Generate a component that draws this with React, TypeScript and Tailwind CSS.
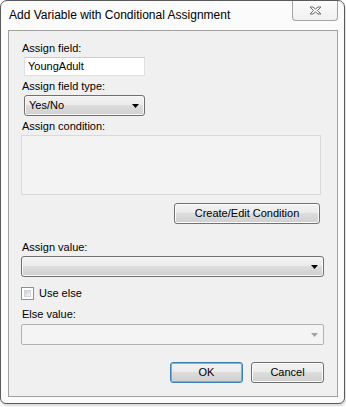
import React from "react";

const font = { fontFamily: '"Liberation Sans", Arial, sans-serif' };

const Arrow = ({ disabled }: { disabled?: boolean }) => (
  <svg width="7" height="4" viewBox="0 0 7 4" className="shrink-0">
    <path d="M0 0H7L3.5 4Z" fill={disabled ? "#a2a2a2" : "#000"} />
  </svg>
);

const Combo = ({ value, className }: { value?: string; className: string }) => (
  <div
    className={`h-[21px] flex items-center justify-between pl-[4px] pr-[5px] rounded-[3px] border border-[#707070] bg-[linear-gradient(#f2f2f2_0%,#ebebeb_50%,#dddddd_50%,#cfcfcf_100%)] shadow-[inset_0_0_0_1px_#f8f8f8] text-[11px] text-black ${className}`}
  >
    <span>{value}</span>
    <Arrow />
  </div>
);

const WinButton = ({ label, className, isDefault }: { label: string; className: string; isDefault?: boolean }) => (
  <div
    className={`h-[21px] flex items-center justify-center rounded-[3px] border text-[11px] text-black bg-[linear-gradient(#f2f2f2_0%,#ebebeb_50%,#dddddd_50%,#cfcfcf_100%)] ${
      isDefault
        ? "border-[#3c7fb1] shadow-[inset_0_0_0_1px_#48c4f5]"
        : "border-[#707070] shadow-[inset_0_0_0_1px_#fcfcfc]"
    } ${className}`}
  >
    {label}
  </div>
);

export default function App() {
  return (
    <div className="w-[346px] h-[407px] bg-white" style={font}>
      <div className="w-[345px] h-[404px] border border-[#5a5a5a] rounded-t-[7px] rounded-b-[6px] bg-[#fbfbfb] flex flex-col shadow-[1px_2px_2px_rgba(0,0,0,0.15)]">
        {/* title bar */}
        <div className="h-[29px] flex items-start justify-between">
          <div className="pl-[8px] pt-[7px] text-[12px] leading-[15px] text-black">
            Add Variable with Conditional Assignment
          </div>
          <div className="mr-[6px] w-[46px] h-[20px] border border-t-0 border-[#a5a5a5] rounded-b-[4px] bg-gradient-to-b from-[#fcfcfc] to-[#f0f0f0] flex items-center justify-center">
            <svg width="13" height="9" viewBox="0 0 13 9">
              <path
                d="M1 1H4L6.5 3L9 1H12L8.5 4.5L12 8H9L6.5 6L4 8H1L4.5 4.5Z"
                fill="#f4f4f4"
                stroke="#6f6f6f"
                strokeWidth="1"
                strokeLinejoin="round"
              />
            </svg>
          </div>
        </div>

        {/* client area */}
        <div className="mx-[7px] mr-[6px] h-[367px] border border-[#a0a0a0] bg-[#f0f0f0] flex flex-col text-[11px] leading-[13px] text-black">
          <div className="mt-[11px] ml-[13px]">Assign field:</div>
          <div className="mt-[2px] ml-[15px] w-[121px] h-[19px] border border-[#dde1e6] border-t-[#c9ccd2] bg-white flex items-center pl-[3px]">
            YoungAdult
          </div>
          <div className="mt-[4px] ml-[13px]">Assign field type:</div>
          <Combo value="Yes/No" className="mt-[2px] ml-[15px] w-[121px]" />
          <div className="mt-[4px] ml-[13px]">Assign condition:</div>
          <div className="mt-[2px] ml-[12px] w-[300px] h-[60px] border border-[#d9d9d9] bg-[#f3f3f3]" />
          <WinButton label="Create/Edit Condition" className="mt-[8px] ml-[165px] w-[146px]" />
          <div className="mt-[17px] ml-[13px]">Assign value:</div>
          <Combo className="mt-[2px] ml-[12px] w-[303px]" />
          <div className="mt-[10px] ml-[12px] flex items-start">
            <div className="w-[13px] h-[13px] border border-[#8e8f8f] bg-white p-[2px]">
              <div className="w-full h-full bg-gradient-to-br from-[#cbcfd5] to-[#f6f6f6] border border-[#d0d3d8]" />
            </div>
            <span className="ml-[5px]">Use else</span>
          </div>
          <div className="mt-[8px] ml-[13px]">Else value:</div>
          <div className="mt-[3px] ml-[12px] w-[303px] h-[21px] rounded-[2px] border border-[#adb2b5] bg-[#f4f4f4] flex items-center justify-end pr-[5px]">
            <Arrow disabled />
          </div>
          <div className="mt-[17px] ml-[161px] flex gap-[8px]">
            <WinButton label="OK" isDefault className="w-[73px]" />
            <WinButton label="Cancel" className="w-[73px]" />
          </div>
        </div>
      </div>
    </div>
  );
}
